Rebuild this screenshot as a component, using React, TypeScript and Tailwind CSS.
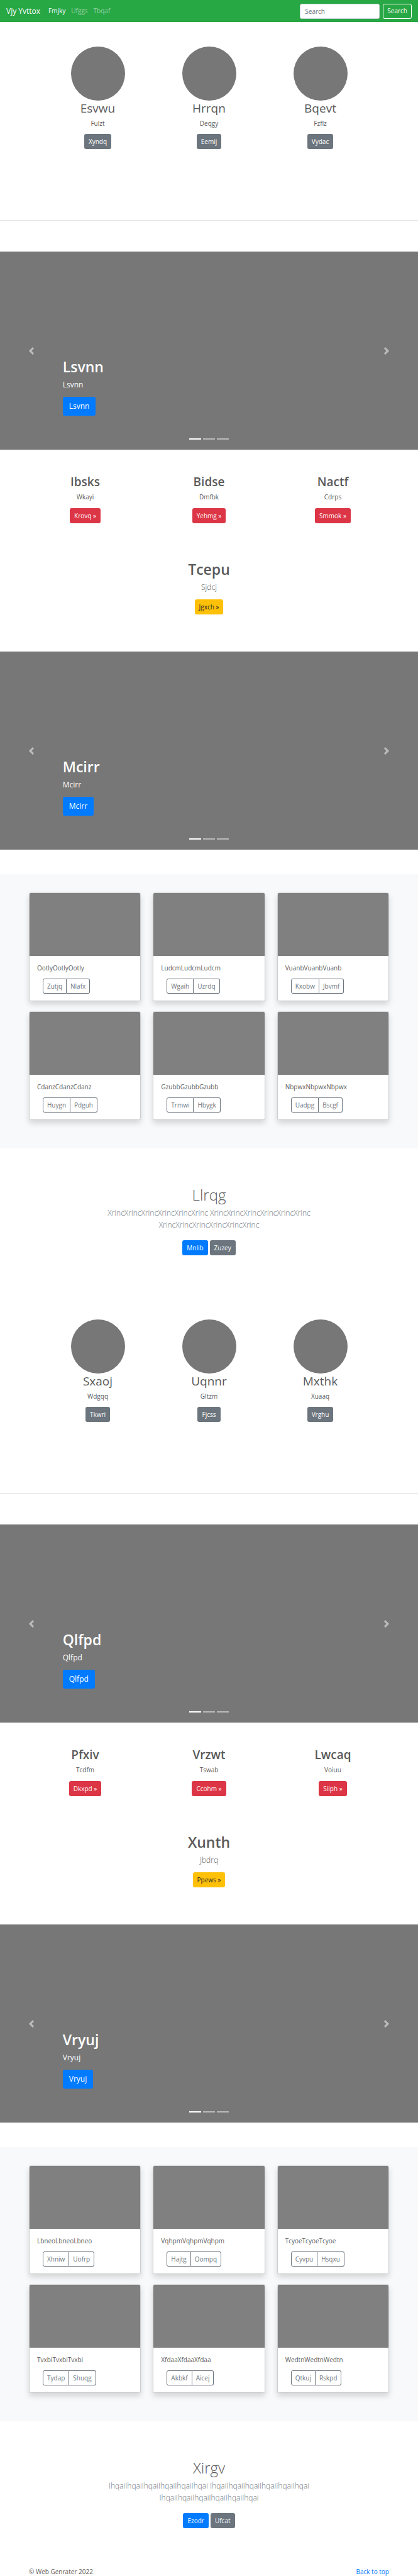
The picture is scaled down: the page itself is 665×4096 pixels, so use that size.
import type { ReactNode } from "react";

type Item = { title: string; text: string; action: string };
type Card = { text: string; left: string; right: string };
type Block = {
  id: string;
  people: Item[];
  slideOne: string;
  features: Item[];
  callout: Item;
  slideTwo: string;
  cards: Card[];
  intro: { title: string; text: string; primary: string; secondary: string };
};

const blocks: Block[] = [
  {
    id: "first",
    people: [
      { title: "Esvwu", text: "Fulzt", action: "Xyndq" },
      { title: "Hrrqn", text: "Deqgy", action: "Eemij" },
      { title: "Bqevt", text: "Fzflz", action: "Vydac" },
    ],
    slideOne: "Lsvnn",
    features: [
      { title: "Ibsks", text: "Wkayi", action: "Krovq »" },
      { title: "Bidse", text: "Dmfbk", action: "Yehmg »" },
      { title: "Nactf", text: "Cdrps", action: "Smmok »" },
    ],
    callout: { title: "Tcepu", text: "Sjdcj", action: "Jgxch »" },
    slideTwo: "Mcirr",
    cards: [
      { text: "OotlyOotlyOotly", left: "Zutjq", right: "Nlafx" },
      { text: "LudcmLudcmLudcm", left: "Wgaih", right: "Uzrdq" },
      { text: "VuanbVuanbVuanb", left: "Kxobw", right: "Jbvmf" },
      { text: "CdanzCdanzCdanz", left: "Huygn", right: "Pdguh" },
      { text: "GzubbGzubbGzubb", left: "Trmwi", right: "Hbygk" },
      { text: "NbpwxNbpwxNbpwx", left: "Uadpg", right: "Bscgf" },
    ],
    intro: {
      title: "Llrqg",
      text: "XrincXrincXrincXrincXrincXrinc XrincXrincXrincXrincXrincXrinc XrincXrincXrincXrincXrincXrinc",
      primary: "Mnlib",
      secondary: "Zuzey",
    },
  },
  {
    id: "second",
    people: [
      { title: "Sxaoj", text: "Wdgqq", action: "Tkwri" },
      { title: "Uqnnr", text: "Gltzm", action: "Fjcss" },
      { title: "Mxthk", text: "Xuaaq", action: "Vrghu" },
    ],
    slideOne: "Qlfpd",
    features: [
      { title: "Pfxiv", text: "Tcdfm", action: "Dkxpd »" },
      { title: "Vrzwt", text: "Tswab", action: "Ccohm »" },
      { title: "Lwcaq", text: "Voiuu", action: "Siiph »" },
    ],
    callout: { title: "Xunth", text: "Jbdrq", action: "Ppews »" },
    slideTwo: "Vryuj",
    cards: [
      { text: "LbneoLbneoLbneo", left: "Xhniw", right: "Uofrp" },
      { text: "VqhpmVqhpmVqhpm", left: "Hajtg", right: "Oompq" },
      { text: "TcyoeTcyoeTcyoe", left: "Cyvpu", right: "Hsqxu" },
      { text: "TvxbiTvxbiTvxbi", left: "Tydap", right: "Shuqg" },
      { text: "XfdaaXfdaaXfdaa", left: "Akbkf", right: "Aicej" },
      { text: "WedtnWedtnWedtn", left: "Qtkuj", right: "Rskpd" },
    ],
    intro: {
      title: "Xirgv",
      text: "IhqaiIhqaiIhqaiIhqaiIhqaiIhqai IhqaiIhqaiIhqaiIhqaiIhqaiIhqai IhqaiIhqaiIhqaiIhqaiIhqaiIhqai",
      primary: "Ezodr",
      secondary: "Ufcat",
    },
  },
];

const tones = {
  gray: "bg-[#6c757d] text-white",
  blue: "bg-[#007bff] text-white",
  red: "bg-[#dc3545] text-white",
  yellow: "bg-[#ffc107] text-[#212529]",
};

function Button({ tone, children }: { tone: keyof typeof tones; children: ReactNode }) {
  return (
    <a href="#" className={`flex h-6 items-center rounded-[3px] px-[7px] ${tones[tone]}`}>
      {children}
    </a>
  );
}

function Navbar() {
  return (
    <header className="flex h-[35px] items-center justify-between bg-[#28a745] px-[10px] text-white">
      <nav className="flex items-center">
        <a href="#" className="mr-[13px] text-[12px]">Vjy Yvttox</a>
        <div className="flex gap-[9px]">
          <a href="#">Fmjky</a>
          <a href="#" className="text-white/50">Ufggs</a>
          <a href="#" className="text-white/50">Tbqaf</a>
        </div>
      </nav>
      <form className="flex gap-[5px]">
        <input
          type="text"
          placeholder="Search"
          aria-label="Search"
          className="h-6 w-[127px] rounded-[3px] border border-[#ced4da] bg-white px-[7px] text-[#495057] placeholder:text-[#6c757d]"
        />
        <button type="submit" className="h-6 rounded-[3px] border border-white px-[6px]">
          Search
        </button>
      </form>
    </header>
  );
}

function People({ items }: { items: Item[] }) {
  return (
    <section className="grid grid-cols-3 px-[67px] pt-[39px]">
      {items.map((item) => (
        <div key={item.title} className="flex flex-col items-center">
          <div className="size-[86px] rounded-full bg-[#777]" />
          <h2 className="mb-[5px] text-[19px] leading-6">{item.title}</h2>
          <p className="mb-[10px] leading-[14px]">{item.text}</p>
          <Button tone="gray">{item.action}</Button>
        </div>
      ))}
    </section>
  );
}

function Chevron({ direction }: { direction: "left" | "right" }) {
  return (
    <svg viewBox="0 0 8 8" className="size-3" fill="#fff" aria-hidden="true">
      <path
        d={
          direction === "left"
            ? "M5.25 0l-4 4 4 4 1.5-1.5L4.25 4l2.5-2.5L5.25 0z"
            : "M2.75 0l-1.5 1.5L3.75 4l-2.5 2.5L2.75 8l4-4-4-4z"
        }
      />
    </svg>
  );
}

function Carousel({ title }: { title: string }) {
  return (
    <section className="relative flex h-[315px] bg-[#777] text-white">
      <button type="button" aria-label="Previous" className="flex w-[15%] items-center justify-center opacity-50">
        <Chevron direction="left" />
      </button>
      <div className="flex flex-1 flex-col items-start justify-end pb-[54px]">
        <h1 className="mb-[5px] text-[23px] font-semibold leading-[30px]">{title}</h1>
        <p className="mb-[10px] text-[12px] leading-[18px]">{title}</p>
        <a href="#" className="flex h-[30px] items-center rounded-[3px] bg-[#007bff] px-[10px] text-[12px]">
          {title}
        </a>
      </div>
      <button type="button" aria-label="Next" className="flex w-[15%] items-center justify-center opacity-50">
        <Chevron direction="right" />
      </button>
      <div className="absolute inset-x-0 bottom-4 flex justify-center gap-[3px]">
        <span className="h-[2px] w-[19px] bg-white" />
        <span className="h-[2px] w-[19px] bg-white/50" />
        <span className="h-[2px] w-[19px] bg-white/50" />
      </div>
    </section>
  );
}

function Features({ items }: { items: Item[] }) {
  return (
    <section className="grid grid-cols-3 px-[37px] pt-[39px]">
      {items.map((item) => (
        <div key={item.title} className="flex flex-col items-center">
          <h2 className="mb-[5px] text-[19px] font-semibold leading-6">{item.title}</h2>
          <p className="mb-[11px] leading-[14px]">{item.text}</p>
          <Button tone="red">{item.action}</Button>
        </div>
      ))}
    </section>
  );
}

function Callout({ item }: { item: Item }) {
  return (
    <section className="flex flex-col items-center pb-[59px] pt-[58px]">
      <h1 className="mb-1 text-[23px] font-semibold leading-[30px]">{item.title}</h1>
      <p className="mb-[10px] text-[12px] font-light leading-[19px]">{item.text}</p>
      <Button tone="yellow">{item.action}</Button>
    </section>
  );
}

function Album({ cards }: { cards: Card[] }) {
  return (
    <section className="mt-[39px] grid grid-cols-3 gap-x-[19px] gap-y-4 bg-[#f8f9fa] px-[46px] pb-[45px] pt-[29px]">
      {cards.map((card) => (
        <article
          key={card.text}
          className="overflow-hidden rounded-[3px] border border-black/10 bg-white bg-clip-padding shadow-[0_5px_10px_rgba(0,0,0,0.15)]"
        >
          <div className="h-[100px] bg-[#808080]" />
          <div className="px-3 pb-[11px] pt-3">
            <p className="mb-[10px] leading-[14px]">{card.text}</p>
            <div className="ml-[9px] flex text-[#6c757d]">
              <button type="button" className="h-6 rounded-l-[3px] border border-[#6c757d] px-[6px]">
                {card.left}
              </button>
              <button type="button" className="h-6 rounded-r-[3px] border border-l-0 border-[#6c757d] px-[6px]">
                {card.right}
              </button>
            </div>
          </div>
        </article>
      ))}
    </section>
  );
}

function Intro({ intro }: { intro: Block["intro"] }) {
  return (
    <section className="flex flex-col items-center pb-[63px] pt-[59px] text-center">
      <h1 className="mb-1 text-[24px] font-light leading-[30px]">{intro.title}</h1>
      <p className="mb-[15px] w-1/2 text-[12px] font-light leading-[19px] text-[#6c757d]">{intro.text}</p>
      <div className="flex gap-[3px]">
        <Button tone="blue">{intro.primary}</Button>
        <Button tone="gray">{intro.secondary}</Button>
      </div>
    </section>
  );
}

export default function App() {
  return (
    <div className="bg-white font-['Open_Sans','Noto_Sans',sans-serif] text-[10px] text-[#5a5a5a]">
      <Navbar />
      <main>
        {blocks.map((block) => (
          <div key={block.id}>
            <People items={block.people} />
            <hr className="mb-[49px] mt-[113px] border-t border-[#e5e5e5]" />
            <Carousel title={block.slideOne} />
            <Features items={block.features} />
            <Callout item={block.callout} />
            <Carousel title={block.slideTwo} />
            <Album cards={block.cards} />
            <Intro intro={block.intro} />
          </div>
        ))}
      </main>
      <footer className="flex justify-between px-[46px] leading-[13px]">
        <p>© Web Genrater 2022</p>
        <a href="#" className="text-[#007bff]">Back to top</a>
      </footer>
    </div>
  );
}
